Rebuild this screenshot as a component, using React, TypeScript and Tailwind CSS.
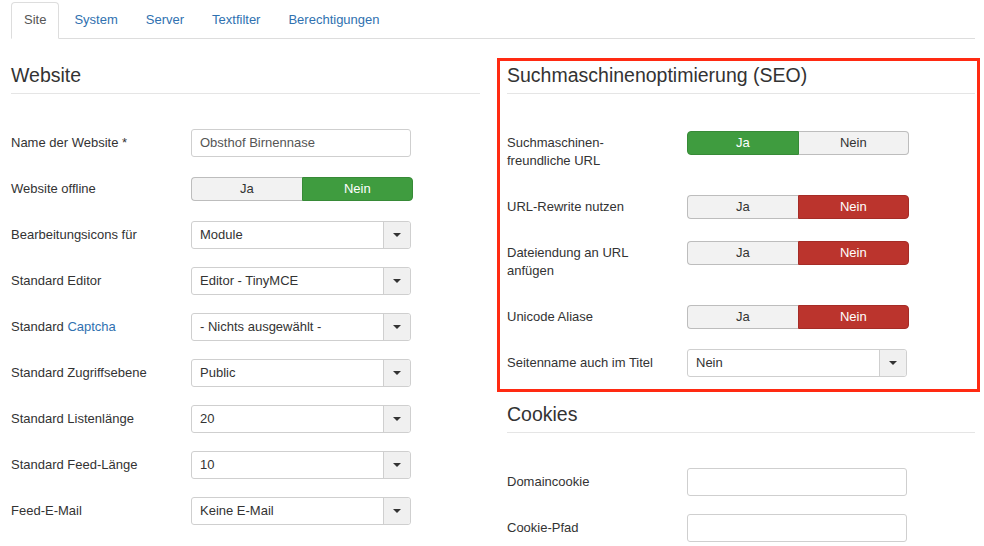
import React from 'react';

type Toggle = { kind: 'toggle'; value: 'ja' | 'nein' };
type Select = { kind: 'select'; value: string };
type Text = { kind: 'text'; value: string };
type Field = { label: React.ReactNode; control: Toggle | Select | Text };

const tabs = ['Site', 'System', 'Server', 'Textfilter', 'Berechtigungen'];

const websiteFields: Field[] = [
  { label: 'Name der Website *', control: { kind: 'text', value: 'Obsthof Birnennase' } },
  { label: 'Website offline', control: { kind: 'toggle', value: 'nein' } },
  { label: 'Bearbeitungsicons für', control: { kind: 'select', value: 'Module' } },
  { label: 'Standard Editor', control: { kind: 'select', value: 'Editor - TinyMCE' } },
  {
    label: (
      <>
        Standard <span className="text-[#3071b0]">Captcha</span>
      </>
    ),
    control: { kind: 'select', value: '- Nichts ausgewählt -' },
  },
  { label: 'Standard Zugriffsebene', control: { kind: 'select', value: 'Public' } },
  { label: 'Standard Listenlänge', control: { kind: 'select', value: '20' } },
  { label: 'Standard Feed-Länge', control: { kind: 'select', value: '10' } },
  { label: 'Feed-E-Mail', control: { kind: 'select', value: 'Keine E-Mail' } },
];

const seoFields: Field[] = [
  {
    label: (
      <>
        Suchmaschinen-
        <br />
        freundliche URL
      </>
    ),
    control: { kind: 'toggle', value: 'ja' },
  },
  { label: 'URL-Rewrite nutzen', control: { kind: 'toggle', value: 'nein' } },
  {
    label: (
      <>
        Dateiendung an URL
        <br />
        anfügen
      </>
    ),
    control: { kind: 'toggle', value: 'nein' },
  },
  { label: 'Unicode Aliase', control: { kind: 'toggle', value: 'nein' } },
  { label: 'Seitenname auch im Titel', control: { kind: 'select', value: 'Nein' } },
];

const cookieFields: Field[] = [
  { label: 'Domaincookie', control: { kind: 'text', value: '' } },
  { label: 'Cookie-Pfad', control: { kind: 'text', value: '' } },
];

const YesNo: React.FC<{ value: 'ja' | 'nein'; redOnNo: boolean }> = ({ value, redOnNo }) => {
  const yesActive = value === 'ja';
  const noClass = redOnNo
    ? 'bg-[#bb342d] border-[#a52c26] text-white'
    : 'bg-[#3f9c3f] border-[#378a37] text-white';
  return (
    <div className="mt-[2px] flex h-[24px] w-[222px]">
      <div
        className={
          yesActive
            ? 'flex flex-1 items-center justify-center rounded-l-[4px] border border-[#378a37] bg-[#3f9c3f] text-white'
            : 'flex flex-1 items-center justify-center rounded-l-[4px] border border-r-0 border-[#bdbdbd] bg-[#f2f2f2] text-[#333]'
        }
      >
        Ja
      </div>
      <div
        className={
          !yesActive
            ? `flex flex-1 items-center justify-center rounded-r-[4px] border ${noClass}`
            : 'flex flex-1 items-center justify-center rounded-r-[4px] border border-l-0 border-[#bdbdbd] bg-[#f2f2f2] text-[#333]'
        }
      >
        Nein
      </div>
    </div>
  );
};

const Control: React.FC<{ control: Field['control']; redOnNo: boolean }> = ({ control, redOnNo }) => {
  if (control.kind === 'toggle') return <YesNo value={control.value} redOnNo={redOnNo} />;
  if (control.kind === 'select') {
    return (
      <div className="flex h-[28px] w-[220px] rounded-[3px] border border-[#cfcfcf] bg-white">
        <div className="flex flex-1 items-center pl-[8px] text-[#333]">{control.value}</div>
        <div className="flex w-[27px] items-center justify-center rounded-r-[3px] border-l border-[#cfcfcf] bg-[#f0f0f0]">
          <span className="h-0 w-0 border-x-[4px] border-t-[4px] border-x-transparent border-t-[#333]" />
        </div>
      </div>
    );
  }
  return (
    <div className="flex h-[28px] w-[220px] items-center rounded-[3px] border border-[#cfcfcf] bg-white pl-[8px] text-[#555]">
      {control.value}
    </div>
  );
};

const FieldList: React.FC<{ fields: Field[]; redOnNo?: boolean }> = ({ fields, redOnNo = false }) => (
  <div className="flex flex-col gap-[18px]">
    {fields.map((f, i) => (
      <div key={i} className="flex items-start">
        <div className="w-[180px] shrink-0 py-[5px] leading-[18px] text-[#333]">{f.label}</div>
        <Control control={f.control} redOnNo={redOnNo} />
      </div>
    ))}
  </div>
);

const Heading: React.FC<{ title: string }> = ({ title }) => (
  <h2 className="mb-[35px] border-b border-[#e5e5e5] pb-[5px] text-[19.5px] leading-[26px] text-[#333]">
    {title}
  </h2>
);

export default function App() {
  return (
    <div
      className="h-[546px] w-[984px] overflow-hidden bg-white text-[13px] leading-[18px]"
      style={{ fontFamily: '"Liberation Sans", Arial, sans-serif' }}
    >
      <div className="ml-[11px] mr-[9px] flex border-b border-[#dddddd]">
        {tabs.map((t, i) => (
          <div
            key={t}
            className={
              i === 0
                ? '-mb-px mr-[2px] mt-[2px] rounded-t-[4px] border border-b-white border-[#dddddd] bg-white px-[12px] py-[8px] text-[#555]'
                : 'mr-[2px] mt-[2px] border border-transparent px-[12px] py-[8px] text-[#3071b0]'
            }
          >
            {t}
          </div>
        ))}
      </div>

      <div className="ml-[11px] flex">
        <div className="w-[469px] pt-[23px]">
          <Heading title="Website" />
          <FieldList fields={websiteFields} />
        </div>

        <div className="ml-[17px] w-[483px] pt-[19px]">
          <div className="border-[3px] border-[#ff2a12] pb-[12px] pl-[7px] pr-[2px] pt-[1px]">
            <Heading title="Suchmaschinenoptimierung (SEO)" />
            <FieldList fields={seoFields} redOnNo />
          </div>
          <div className="pl-[10px] pr-[5px] pt-[9px]">
            <Heading title="Cookies" />
            <FieldList fields={cookieFields} />
          </div>
        </div>
      </div>
    </div>
  );
}
